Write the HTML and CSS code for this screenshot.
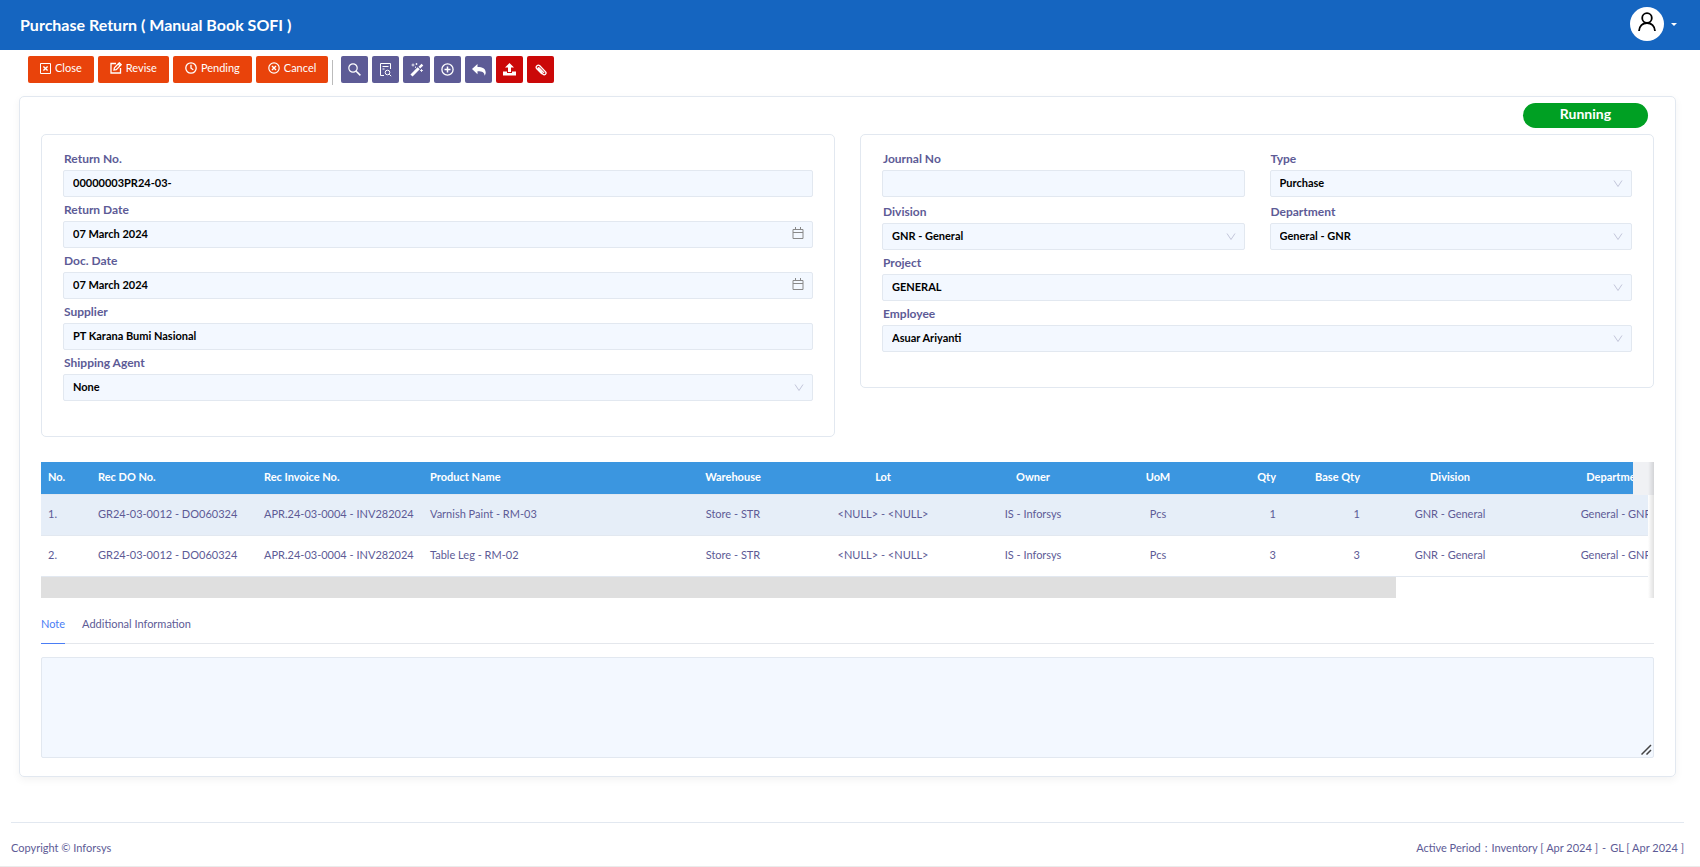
FILE: index.html
```html
<!DOCTYPE html>
<html lang="en">
<head>
<meta charset="utf-8">
<meta name="viewport" content="width=device-width, initial-scale=1">
<title>Purchase Return</title>
<link rel="stylesheet" href="styles.css">
</head>
<body>
<svg class="sprite" aria-hidden="true">
  <symbol id="chevron" viewBox="0 0 10 10"><path d="M1 1.500 5 7.500l4-6" fill="none" stroke="currentColor"/></symbol>
  <symbol id="calendar" viewBox="0 0 12 12"><path d="M1 2.500h10v9H1zM1 5.500h10M3.500 0v3M8.500 0v3" fill="none" stroke="currentColor"/></symbol>
</svg>
<header class="topbar">
  <h1 class="topbar-title">Purchase Return ( Manual Book SOFI )</h1>
  <button class="account" type="button" aria-label="Account">
    <span class="avatar"><svg width="20" height="20" viewBox="0 0 20 20" fill="none" stroke="#000" stroke-width="1.800"><circle cx="10" cy="6" r="4.800"/><path d="M2 19c.2-4.800 3.600-8 8-8s7.800 3.200 8 8"/></svg></span>
    <span class="caret"></span>
  </button>
</header>

<nav class="toolbar" aria-label="Document actions">
  <button class="btn" type="button"><svg width="11" height="11" viewBox="0 0 11 11" fill="none" stroke="currentColor"><path d="M.5.5h10v10H.5z"/><path stroke-width="1.400" d="m3.400 3.400 4.200 4.200M7.600 3.400 3.400 7.600"/></svg>Close</button>
  <button class="btn" type="button"><svg width="12" height="12" viewBox="0 0 12 12" fill="none" stroke="currentColor" stroke-width="1.300"><path d="M6 1.500H1v9.500h9.500V6"/><path d="M4 8l.4-2.300L9.300.8l1.900 1.900-4.900 4.900zM8.200 2l1.800 1.800"/></svg>Revise</button>
  <button class="btn" type="button"><svg width="12" height="12" viewBox="0 0 12 12" fill="none" stroke="currentColor" stroke-width="1.300"><circle cx="6" cy="6" r="5.200"/><path d="M6 2.800v3.400l2.300 1.500"/></svg>Pending</button>
  <button class="btn" type="button"><svg width="12" height="12" viewBox="0 0 12 12" fill="none" stroke="currentColor" stroke-width="1.200"><circle cx="6" cy="6" r="5.200"/><path stroke-width="1.400" d="m4 4 4 4M8 4 4 8"/></svg>Cancel</button>
  <span class="divider"></span>
  <button class="icon-btn" type="button" aria-label="Search"><svg width="13" height="13" viewBox="0 0 13 13" fill="none" stroke="currentColor" stroke-width="1.200"><circle cx="5" cy="5" r="4.200"/><path stroke-width="1.500" d="m8.200 8.200 4.200 4.200"/></svg></button>
  <button class="icon-btn" type="button" aria-label="Preview"><svg width="13" height="14" viewBox="0 0 13 14" fill="none" stroke="currentColor"><path d="M5 12.500H1.500V.5h10V6M3.500 3.500h6M3.500 6h2"/><circle cx="8.500" cy="9.500" r="2.300"/><path d="m10.200 11.200 2 2"/></svg></button>
  <button class="icon-btn" type="button" aria-label="Generate"><svg width="14" height="14" viewBox="0 0 14 14" fill="none" stroke="currentColor"><path stroke-width="3" d="m1.500 12.500 7.200-7.200"/><path stroke-width="2.400" d="m9.400 4.600 3-3"/><path stroke-width=".8" d="M3 .5v3M1.500 2h3M6.500 0v2M5.500 1h2M11.500 6v3M10 7.500h3M5.500 3.500v1.500"/></svg></button>
  <button class="icon-btn" type="button" aria-label="Add"><svg width="13" height="13" viewBox="0 0 13 13" fill="none" stroke="currentColor" stroke-width="1.300"><circle cx="6.500" cy="6.500" r="5.600"/><path stroke-width="1.500" d="M6.500 3.500v6M3.500 6.500h6"/></svg></button>
  <button class="icon-btn" type="button" aria-label="Back"><svg width="14" height="12" viewBox="0 0 14 12" fill="currentColor"><path d="M5.500 0v3c5 0 8.200 1.800 8.200 5.400 0 1.300-.5 2.400-1.200 3.300.3-3.200-2-4.500-7-4.500v3L0 5z"/></svg></button>
  <button class="icon-btn icon-btn-red" type="button" aria-label="Upload"><svg width="13" height="13" viewBox="0 0 13 13" fill="currentColor"><path d="M6.500 0 11 4.500H8V9H5V4.500H2z"/><path d="M0 8.500h4V10h5V8.500h4v4H0z"/></svg></button>
  <button class="icon-btn icon-btn-red" type="button" aria-label="Attach"><svg width="12" height="12" viewBox="0 0 12 12" fill="none" stroke="currentColor" stroke-width="1.300" stroke-linecap="round"><path d="M4 6.500 8 10.300c1.600 1.400 4-.6 2.600-2.400L4.800 1.800C3 .2.100 2.500 1.600 4.600l4.900 5M8.800 8.600 4.200 3.900c-.8-.6-1.500.3-1 .9l3.600 3.600"/></svg></button>
</nav>

<main class="card">
  <div class="status-row"><span class="status">Running</span></div>
  <form class="panels">
    <section class="panel">
      <div class="field"><label for="return-no">Return No.</label><div class="control"><input id="return-no" type="text" value="00000003PR24-03-"></div></div>
      <div class="field"><label for="return-date">Return Date</label><div class="control"><input id="return-date" type="text" value="07 March 2024"><svg class="mark mark-calendar"><use href="#calendar"/></svg></div></div>
      <div class="field"><label for="doc-date">Doc. Date</label><div class="control"><input id="doc-date" type="text" value="07 March 2024"><svg class="mark mark-calendar"><use href="#calendar"/></svg></div></div>
      <div class="field"><label for="supplier">Supplier</label><div class="control"><input id="supplier" type="text" value="PT Karana Bumi Nasional"></div></div>
      <div class="field"><label for="agent">Shipping Agent</label><div class="control"><select id="agent"><option>None</option></select><svg class="mark"><use href="#chevron"/></svg></div></div>
    </section>
    <section class="panel">
      <div class="pair">
        <div class="field"><label for="journal">Journal No</label><div class="control"><input id="journal" type="text"></div></div>
        <div class="field"><label for="type">Type</label><div class="control"><select id="type"><option>Purchase</option></select><svg class="mark"><use href="#chevron"/></svg></div></div>
        <div class="field"><label for="division">Division</label><div class="control"><select id="division"><option>GNR - General</option></select><svg class="mark"><use href="#chevron"/></svg></div></div>
        <div class="field"><label for="department">Department</label><div class="control"><select id="department"><option>General - GNR</option></select><svg class="mark"><use href="#chevron"/></svg></div></div>
      </div>
      <div class="field"><label for="project">Project</label><div class="control"><select id="project"><option>GENERAL</option></select><svg class="mark"><use href="#chevron"/></svg></div></div>
      <div class="field"><label for="employee">Employee</label><div class="control"><select id="employee"><option>Asuar Ariyanti</option></select><svg class="mark"><use href="#chevron"/></svg></div></div>
    </section>
  </form>

  <div class="grid">
    <div class="grid-clip">
      <table class="items">
        <colgroup><col class="w-no"><col class="w-wide"><col class="w-wide"><col class="w-product"><col class="w-mid"><col class="w-mid"><col class="w-mid"><col class="w-uom"><col class="w-qty"><col class="w-base"><col class="w-wide"><col class="w-wide"></colgroup>
        <thead><tr><th>No.</th><th>Rec DO No.</th><th>Rec Invoice No.</th><th>Product Name</th><th class="center">Warehouse</th><th class="center">Lot</th><th class="center">Owner</th><th class="center">UoM</th><th class="right">Qty</th><th class="right">Base Qty</th><th class="center">Division</th><th class="center">Department</th></tr></thead>
        <tbody>
          <tr class="selected"><td>1.</td><td>GR24-03-0012 - DO060324</td><td>APR.24-03-0004 - INV282024</td><td>Varnish Paint - RM-03</td><td class="center">Store - STR</td><td class="center">&lt;NULL&gt; - &lt;NULL&gt;</td><td class="center">IS - Inforsys</td><td class="center">Pcs</td><td class="right">1</td><td class="right">1</td><td class="center">GNR - General</td><td class="center">General - GNR</td></tr>
          <tr><td>2.</td><td>GR24-03-0012 - DO060324</td><td>APR.24-03-0004 - INV282024</td><td>Table Leg - RM-02</td><td class="center">Store - STR</td><td class="center">&lt;NULL&gt; - &lt;NULL&gt;</td><td class="center">IS - Inforsys</td><td class="center">Pcs</td><td class="right">3</td><td class="right">3</td><td class="center">GNR - General</td><td class="center">General - GNR</td></tr>
        </tbody>
      </table>
    </div>
    <div class="scroll-track"><div class="scroll-thumb"></div></div>
    <div class="head-gutter"></div>
    <div class="edge-shadow"></div>
  </div>

  <div class="tabs" role="tablist">
    <button class="tab tab-active" type="button" role="tab" aria-selected="true">Note</button>
    <button class="tab" type="button" role="tab" aria-selected="false">Additional Information</button>
  </div>
  <div class="note-box">
    <textarea class="note" aria-label="Note"></textarea>
    <svg class="grip" viewBox="0 0 11 11" aria-hidden="true"><path d="M.5 10.500 10 1M5.500 10.500 10 6" fill="none" stroke="#444" stroke-width="1.500"/></svg>
  </div>
</main>

<footer class="footer">
  <span>Copyright © Inforsys</span>
  <span class="period"><span>Active Period</span><span>:</span><span>Inventory [ Apr 2024 ]</span><span>-</span><span>GL [ Apr 2024 ]</span></span>
</footer>
</body>
</html>
```
FILE: styles.css
```css
* { box-sizing: border-box; }
body {
  margin: 0;
  min-height: 100vh;
  display: flex;
  flex-direction: column;
  background: #fff;
  color: #5d5b96;
  font: 11px/20px Lato, "Open Sans", sans-serif;
  border-bottom: 1px solid #ebebeb;
}
button, input, select, textarea { font: inherit; }
button { cursor: pointer; }
.sprite { position: absolute; width: 0; height: 0; }

.topbar {
  height: 50px;
  padding: 0 23px 0 20px;
  display: flex;
  align-items: center;
  justify-content: space-between;
  background: #1565c0;
  color: #fff;
}
.topbar-title { margin: 0; font-size: 16px; line-height: 24px; }
.account {
  display: flex;
  align-items: center;
  gap: 7px;
  padding: 0 0 2px;
  border: 0;
  background: none;
}
.avatar {
  width: 34px;
  height: 34px;
  border-radius: 50%;
  background: #fff;
  display: flex;
  justify-content: center;
  align-items: flex-start;
  padding-top: 5px;
}
.caret { border: 3px solid transparent; border-top-color: #fff; border-bottom: 0; }

.toolbar { display: flex; gap: 4px; padding: 6px 28px 0; }
.btn, .icon-btn { height: 27px; border: 0; border-radius: 2px; color: #fff; }
.btn {
  display: flex;
  align-items: center;
  gap: 4px;
  padding: 0 12px 3px;
  background: #e9430b;
}
.icon-btn {
  width: 27px;
  padding: 0;
  display: grid;
  place-items: center;
  background: #5d5b96;
}
.icon-btn-red { background: #cb0808; }
.divider { width: 1px; height: 25px; margin: 4px 4px 0 0; background: #bbb; }

.card {
  margin: 11px 24px 0 19px;
  padding: 6px 21px 18px;
  border: 1px solid #e2e8f0;
  border-radius: 5px;
  box-shadow: 0 3px 8px rgba(0, 0, 0, 0.05);
}
.status-row { display: flex; justify-content: flex-end; padding-right: 6px; }
.status {
  width: 125px;
  height: 25px;
  border-radius: 13px;
  background: #00a023;
  color: #fff;
  font-size: 14px;
  font-weight: 700;
  line-height: 22px;
  text-align: center;
}
.panels {
  margin-top: 6px;
  display: grid;
  grid-template-columns: 1fr 1fr;
  align-items: start;
  gap: 25px;
}
.panel { padding: 11px 21px 35px; border: 1px solid #e2e8f0; border-radius: 5px; }
.pair { display: grid; grid-template-columns: 1fr 1fr; gap: 2px 25px; }
.field label {
  display: block;
  width: fit-content;
  padding: 3px 0 1px 1px;
  font-size: 12px;
  font-weight: 700;
}
.control { position: relative; display: flex; }
.control input, .control select {
  appearance: none;
  width: 100%;
  height: 27px;
  margin: 0;
  padding: 0 9px 2px;
  border: 1px solid #e2e8f0;
  border-radius: 2px;
  background: #f3f8ff;
  color: #000;
  font-size: 11px;
  font-weight: 700;
}
.mark {
  position: absolute;
  right: 9px;
  top: 9px;
  width: 10px;
  height: 10px;
  color: #c3c6da;
  pointer-events: none;
}
.mark-calendar { top: 6px; width: 12px; height: 12px; color: #888; }

.grid { position: relative; margin-top: 25px; }
.grid-clip { margin-right: 6px; overflow: hidden; }
.items {
  width: 1658px;
  table-layout: fixed;
  border-collapse: separate;
  border-spacing: 0;
}
.w-no { width: 50px; }
.w-wide { width: 166px; }
.w-product { width: 235px; }
.w-mid { width: 150px; }
.w-uom { width: 100px; }
.w-qty { width: 75px; }
.w-base { width: 84px; }
.items th, .items td {
  padding: 0 7px 2px;
  text-align: left;
  white-space: nowrap;
  border-bottom: 1px solid #e2e8f0;
}
.items th { height: 33px; background: #3b96e0; color: #fff; }
.items td { height: 41px; }
.items .center { text-align: center; }
.items .right { text-align: right; }
.selected { background: #e6eef8; }
.scroll-track { height: 21px; }
.scroll-thumb { width: 84%; height: 100%; background: #dfdfdf; }
.head-gutter {
  position: absolute;
  top: 0;
  right: 0;
  width: 21px;
  height: 33px;
  background: #f0f1f4;
}
.edge-shadow {
  position: absolute;
  top: 0;
  right: 0;
  bottom: 0;
  width: 6px;
  background: linear-gradient(to right, transparent, rgba(0, 0, 0, 0.12));
}

.tabs {
  margin-top: 16px;
  display: flex;
  gap: 17px;
  border-bottom: 1px solid #e4e7ec;
}
.tab {
  height: 30px;
  margin-bottom: -1px;
  padding: 0 0 9px;
  border: 0;
  border-bottom: 1px solid transparent;
  background: none;
  color: #5d5b96;
}
.tab-active { color: #4a7df5; border-bottom-color: #4a7df5; }
.note-box { position: relative; margin-top: 13px; }
.note {
  display: block;
  width: 100%;
  height: 101px;
  padding: 4px 9px;
  border: 1px solid #e2e8f0;
  border-radius: 2px;
  background: #f3f8ff;
}
.note::-webkit-resizer { background: transparent; }
.grip {
  position: absolute;
  right: 2px;
  bottom: 3px;
  width: 11px;
  height: 11px;
  pointer-events: none;
}

.footer {
  margin: auto 16px 0 11px;
  height: 44px;
  padding-top: 15px;
  display: flex;
  justify-content: space-between;
  border-top: 1px solid #e2e8f0;
}
.period { display: flex; gap: 4px; }
```
